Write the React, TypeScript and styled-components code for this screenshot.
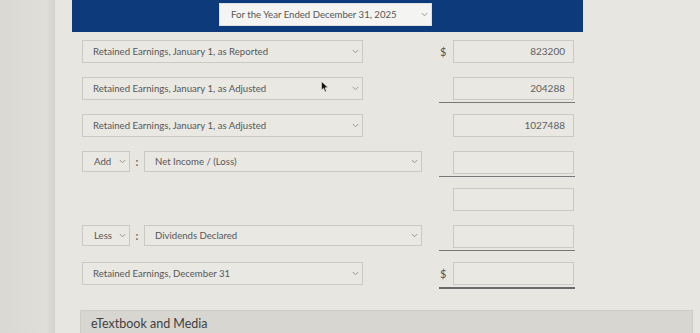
import React from "react";
import styled, { createGlobalStyle } from "styled-components";

const Global = createGlobalStyle`
  html, body {
    margin: 0;
    padding: 0;
    background: #dcdbd6;
    font-family: Lato, "Open Sans", "Liberation Sans", sans-serif;
  }
`;

const Page = styled.div`
  position: relative;
  display: flex;
  width: 700px;
  height: 333px;
  overflow: hidden;
`;

const Gutter = styled.div`
  width: 54px;
  flex-shrink: 0;
  background: linear-gradient(90deg, #dad9d4 0%, #dfded9 85%, #d5d4cf 100%);
`;

const Sheet = styled.div`
  flex: 1;
  background: #e7e6e1;
  border-left: 1px solid #d2d1cc;
  padding-left: 17px;
  display: flex;
  flex-direction: column;
  & > * {
    flex-shrink: 0;
  }
`;

const Header = styled.div`
  width: 511px;
  height: 32px;
  box-sizing: border-box;
  background: #0c3a7b;
  display: flex;
  align-items: flex-start;
  padding: 3px 0 0 147px;
`;

const Chevron = () => (
  <svg width="7" height="5" viewBox="0 0 7 5">
    <polyline points="0.8,1 3.5,3.8 6.2,1" fill="none" stroke="#999" strokeWidth="1" />
  </svg>
);

const SelectBox = styled.div<{ $w: number; $h?: number; $pad?: number; $light?: boolean }>`
  width: ${(p) => p.$w}px;
  height: ${(p) => p.$h ?? 23}px;
  box-sizing: border-box;
  flex-shrink: 0;
  display: flex;
  align-items: center;
  justify-content: space-between;
  padding: 0 3px 0 ${(p) => p.$pad ?? 10}px;
  border: 1px solid ${(p) => (p.$light ? "#e0e0e0" : "#cbc9c3")};
  background: ${(p) => (p.$light ? "#f4f4f2" : "#e9e8e3")};
  color: #575757;
  font-size: 9.6px;
  white-space: nowrap;
`;

const Form = styled.div`
  margin: 8px 0 0 10px;
  display: flex;
  flex-direction: column;
  gap: 14px;
`;

const Row = styled.div`
  height: 23px;
  display: flex;
  align-items: flex-start;
`;

const LeftCell = styled.div`
  width: 357px;
  flex-shrink: 0;
  display: flex;
  align-items: center;
`;

const Colon = styled.span`
  width: 14px;
  text-align: center;
  color: #666;
  font-size: 11px;
  font-weight: 700;
  line-height: 21px;
`;

const AmountCell = styled.div<{ $rule?: "single" | "total" }>`
  width: 136px;
  height: 23px;
  display: flex;
  align-items: center;
  padding-bottom: ${(p) => (p.$rule ? "2px" : "0")};
  border-bottom: ${(p) =>
    p.$rule === "total" ? "2px solid #6a6a6a" : p.$rule === "single" ? "1px solid #777" : "none"};
`;

const Dollar = styled.span`
  width: 13px;
  flex-shrink: 0;
  padding-left: 1px;
  color: #555;
  font-size: 11px;
`;

const AmountBox = styled.div`
  width: 121px;
  height: 23px;
  box-sizing: border-box;
  border: 1px solid #cbc9c3;
  background: #e9e8e3;
  color: #606060;
  font-size: 10px;
  text-align: right;
  padding-right: 8px;
  line-height: 21px;
`;

const Resources = styled.div`
  margin: 25px 0 0 8px;
  width: 613px;
  height: 30px;
  box-sizing: border-box;
  background: #d7d6d1;
  border: 1px solid #cdccc7;
  padding: 5px 0 0 10px;
  color: #3f3f3f;
  font-size: 12.5px;
`;

const Cursor = styled.svg`
  position: absolute;
  left: 321px;
  top: 81px;
`;

type Line = {
  label?: string;
  op?: string;
  amount?: string;
  dollar?: boolean;
  rule?: "single" | "total";
};

const lines: Line[] = [
  { label: "Retained Earnings, January 1, as Reported", amount: "823200", dollar: true },
  { label: "Retained Earnings, January 1, as Adjusted", amount: "204288", rule: "single" },
  { label: "Retained Earnings, January 1, as Adjusted", amount: "1027488" },
  { op: "Add", label: "Net Income / (Loss)", amount: "", rule: "single" },
  { amount: "" },
  { op: "Less", label: "Dividends Declared", amount: "", rule: "single" },
  { label: "Retained Earnings, December 31", amount: "", dollar: true, rule: "total" },
];

export default function App() {
  return (
    <>
      <Global />
      <Page>
        <Gutter />
        <Sheet>
          <Header>
            <SelectBox $w={213} $light $pad={11}>
              For the Year Ended December 31, 2025
              <Chevron />
            </SelectBox>
          </Header>
          <Form>
            {lines.map((line, i) => (
              <Row key={i}>
                <LeftCell>
                  {line.op ? (
                    <>
                      <SelectBox $w={48} $h={21} $pad={11}>
                        {line.op}
                        <Chevron />
                      </SelectBox>
                      <Colon>:</Colon>
                      <SelectBox $w={278} $h={21} $pad={10}>
                        {line.label}
                        <Chevron />
                      </SelectBox>
                    </>
                  ) : line.label ? (
                    <SelectBox $w={281}>
                      {line.label}
                      <Chevron />
                    </SelectBox>
                  ) : null}
                </LeftCell>
                <AmountCell $rule={line.rule}>
                  <Dollar>{line.dollar ? "$" : ""}</Dollar>
                  <AmountBox>{line.amount}</AmountBox>
                </AmountCell>
              </Row>
            ))}
          </Form>
          <Resources>eTextbook and Media</Resources>
        </Sheet>
        <Cursor width="8" height="12" viewBox="0 0 8 12">
          <path d="M0.5 0.5 L0.5 9 L2.6 7.2 L4 10.8 L5.4 10.2 L4 6.8 L7 6.6 Z" fill="#111" stroke="#eee" strokeWidth="0.6" />
        </Cursor>
      </Page>
    </>
  );
}
